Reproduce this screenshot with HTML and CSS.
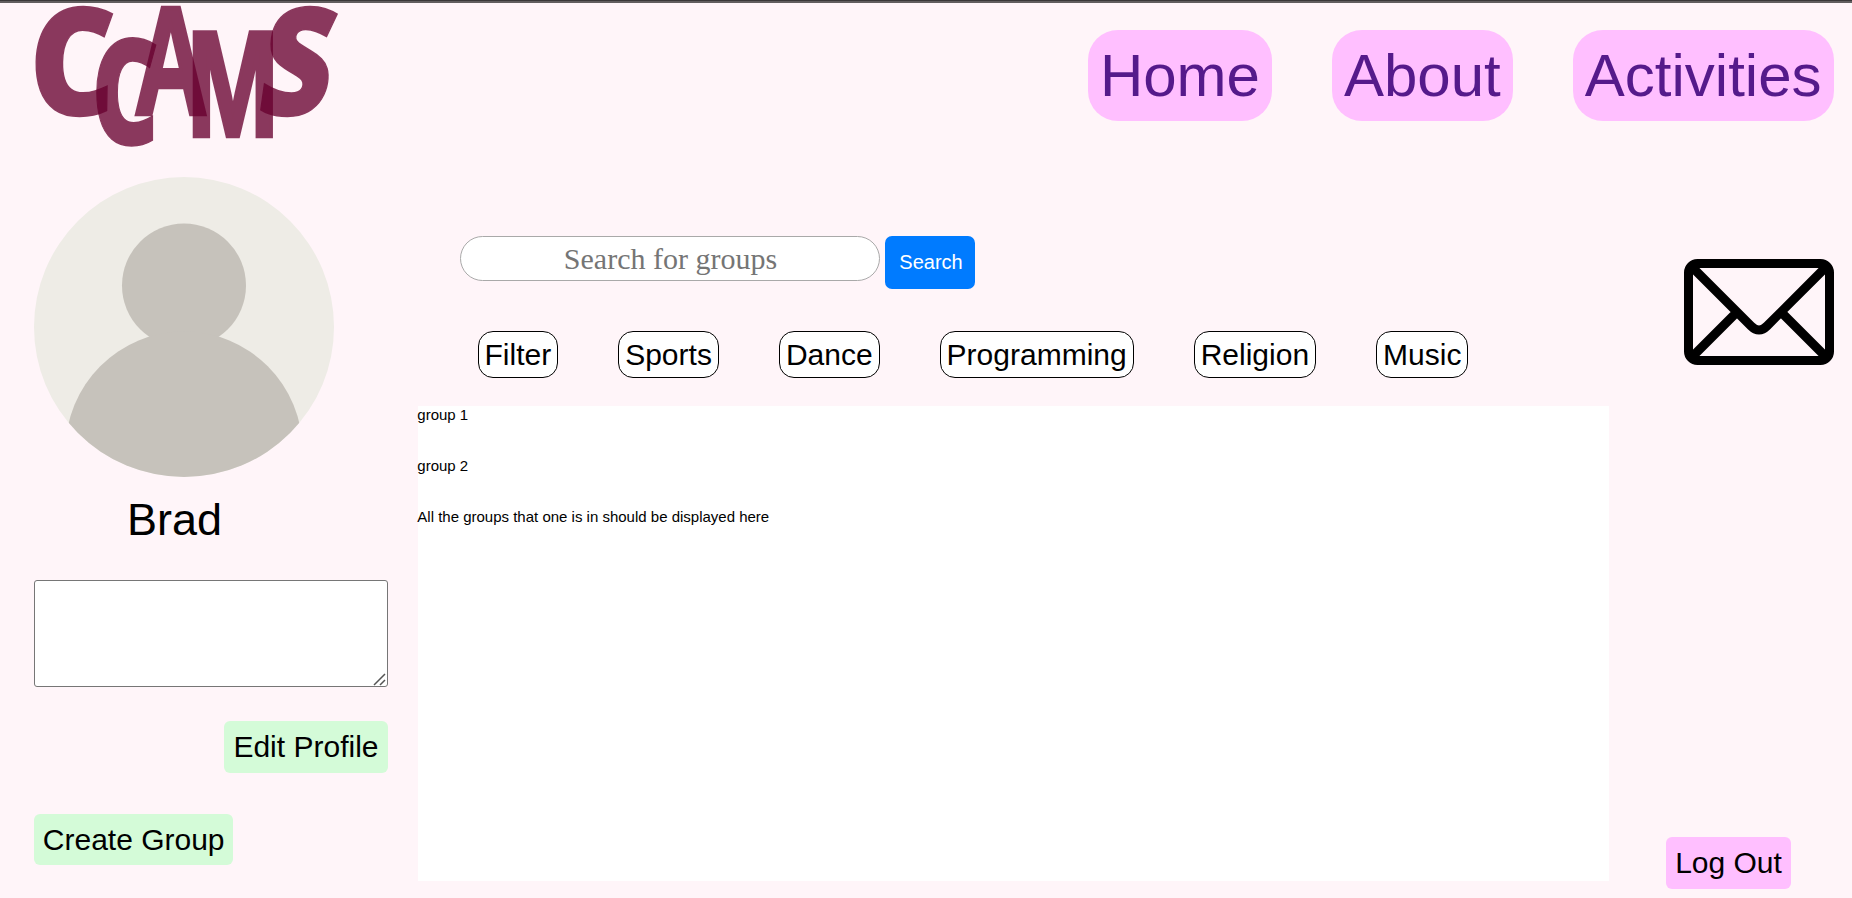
FILE: index.html
```html
<!DOCTYPE html>
<html lang="en">
<head>
<meta charset="utf-8">
<title>CCAMS</title>
<link rel="stylesheet" href="styles.css">
</head>
<body>
<header class="header">
  <svg class="logo" width="310" height="150" viewBox="30 3 310 150" role="img" aria-label="CCAMS">
    <text class="round" transform="translate(28.5 115) skewX(-1) scale(1.33 1.5)">C</text>
    <text class="round" transform="translate(91.5 145) scale(1.04 1.48)">C</text>
    <text class="straight" transform="translate(134 114) scale(1.02 1.54)">A</text>
    <text class="straight" transform="translate(187 136) scale(1.1 1.51)">M</text>
    <text class="round" transform="translate(254.5 115) skewX(-8) scale(1.26 1.5)">S</text>
  </svg>
  <nav class="nav">
    <a class="nav-link">Home</a>
    <a class="nav-link">About</a>
    <a class="nav-link">Activities</a>
  </nav>
</header>
<main class="main">
  <aside class="profile">
    <svg class="avatar" width="300" height="300" viewBox="0 0 300 300">
      <defs><clipPath id="round"><circle cx="150" cy="150" r="150"/></clipPath></defs>
      <g clip-path="url(#round)">
        <rect class="avatar-bg" width="300" height="300"/>
        <circle class="avatar-body" cx="150" cy="108.5" r="62"/>
        <circle class="avatar-body" cx="150" cy="273" r="118.5"/>
      </g>
    </svg>
    <div class="name">Brad</div>
    <div class="bio-wrap">
      <textarea class="bio"></textarea>
      <svg class="grip" width="13" height="13" viewBox="0 0 13 13"><path d="M1 12L12 1M7 12L12 7"/></svg>
    </div>
    <button class="btn edit">Edit Profile</button>
    <button class="btn create">Create Group</button>
  </aside>
  <section class="content">
    <form class="search">
      <input class="search-input" type="text" placeholder="Search for groups">
      <button class="search-btn" type="button">Search</button>
    </form>
    <div class="filters">
      <span class="filter">Filter</span>
      <span class="filter">Sports</span>
      <span class="filter">Dance</span>
      <span class="filter">Programming</span>
      <span class="filter">Religion</span>
      <span class="filter">Music</span>
    </div>
    <div class="groups">
      <p class="group">group 1</p>
      <p class="group">group 2</p>
      <p class="group">All the groups that one is in should be displayed here</p>
    </div>
  </section>
  <aside class="side">
    <svg class="mail" width="150" height="106" viewBox="0 0 150 106">
      <rect x="4.5" y="4.5" width="141" height="97" rx="9"/>
      <path d="M8 8L67 67Q75 75 83 67L142 8M8 98L52 54M142 98L98 54"/>
    </svg>
    <button class="btn logout">Log Out</button>
  </aside>
</main>
</body>
</html>
```
FILE: styles.css
```css
* { box-sizing: border-box; }

body {
  margin: 0;
  height: 898px;
  overflow: hidden;
  background: #fff5f9;
  color: #000;
  font-family: "Liberation Sans", Arial, sans-serif;
}

.header {
  display: flex;
  justify-content: space-between;
  align-items: flex-start;
  height: 177px;
  padding: 3px 18px 0 30px;
  background: linear-gradient(#3a3838 1px, #625e5f 1px, #625e5f 3px, #fff5f9 3px);
}

.logo { display: block; overflow: visible; }

.logo text {
  font-size: 100px;
  fill: #68002f;
  stroke: #68002f;
  opacity: 0.77;
}

.logo .round {
  font-family: "Open Sans", "Noto Sans", sans-serif;
  font-weight: 800;
  stroke-width: 1;
}

.logo .straight {
  font-family: "Liberation Sans", Arial, sans-serif;
  font-weight: 700;
  stroke-width: 3;
}

.nav { display: flex; gap: 60px; padding-top: 27px; }

.nav-link {
  padding: 12px 12.5px 12px 11.5px;
  border-radius: 30px;
  background: #ffbfff;
  color: #551a8b;
  font-size: 60px;
  line-height: 67px;
}

.main {
  display: grid;
  grid-template-columns: 354px 1191px 1fr;
  column-gap: 30px;
  height: 721px;
  padding: 0 18px 0 34px;
}

.profile, .side { display: flex; flex-direction: column; align-items: flex-start; }

.avatar { display: block; }
.avatar-bg { fill: #eeece6; }
.avatar-body { fill: #c6c2bb; }

.name {
  width: 281px;
  margin-top: 17px;
  font-size: 45px;
  line-height: 52px;
  text-align: center;
}

.bio-wrap { position: relative; margin: 34px 0; }

.bio {
  display: block;
  width: 354px;
  height: 107px;
  border: 1px solid #767676;
  border-radius: 3px;
  background: #fff;
  resize: none;
}

.grip {
  position: absolute;
  right: 2px;
  bottom: 1px;
  fill: none;
  stroke: #555;
  stroke-width: 1.5;
}

.btn {
  height: 52px;
  padding: 0 9.5px;
  border: 0;
  border-radius: 6px;
  background: #d4fbd8;
  color: #000;
  font: 30px/34px "Liberation Sans", Arial, sans-serif;
}

.edit { align-self: flex-end; }
.create { height: 51px; margin-top: 41px; padding: 0 8.8px; }

.content { display: flex; flex-direction: column; padding-top: 59px; }

.search { display: flex; align-items: flex-start; gap: 5px; margin-left: 42px; }

.search-input {
  width: 420px;
  height: 45px;
  padding: 0 10px 0 11px;
  border: 1px solid #a9a9a9;
  border-radius: 23px;
  background: #fff;
  font: 30px "Liberation Serif", "Times New Roman", serif;
  text-align: center;
}

.search-input::placeholder { color: #757575; }

.search-btn {
  width: 90px;
  height: 53px;
  padding: 0 0 0 2px;
  border: 0;
  border-radius: 7px;
  background: #007bff;
  color: #fff;
  font: 20px "Liberation Sans", Arial, sans-serif;
}

.filters { display: flex; gap: 60px; margin: 42px 0 28px 59.5px; }

.filter {
  padding: 6px;
  border: 1px solid #000;
  border-radius: 15px;
  background: #fff;
  font-size: 30px;
  line-height: 33px;
}

.groups { height: 475px; background: #fff; }

.group { margin: 0 0 34px -0.7px; font-size: 15px; line-height: 17px; }

.side { justify-content: space-between; padding: 82px 0 9px; }

.mail {
  display: block;
  align-self: flex-end;
  fill: none;
  stroke: #000;
  stroke-width: 9;
}

.logout { width: 125px; margin-left: 27px; padding: 0; background: #ffbfff; }
```
